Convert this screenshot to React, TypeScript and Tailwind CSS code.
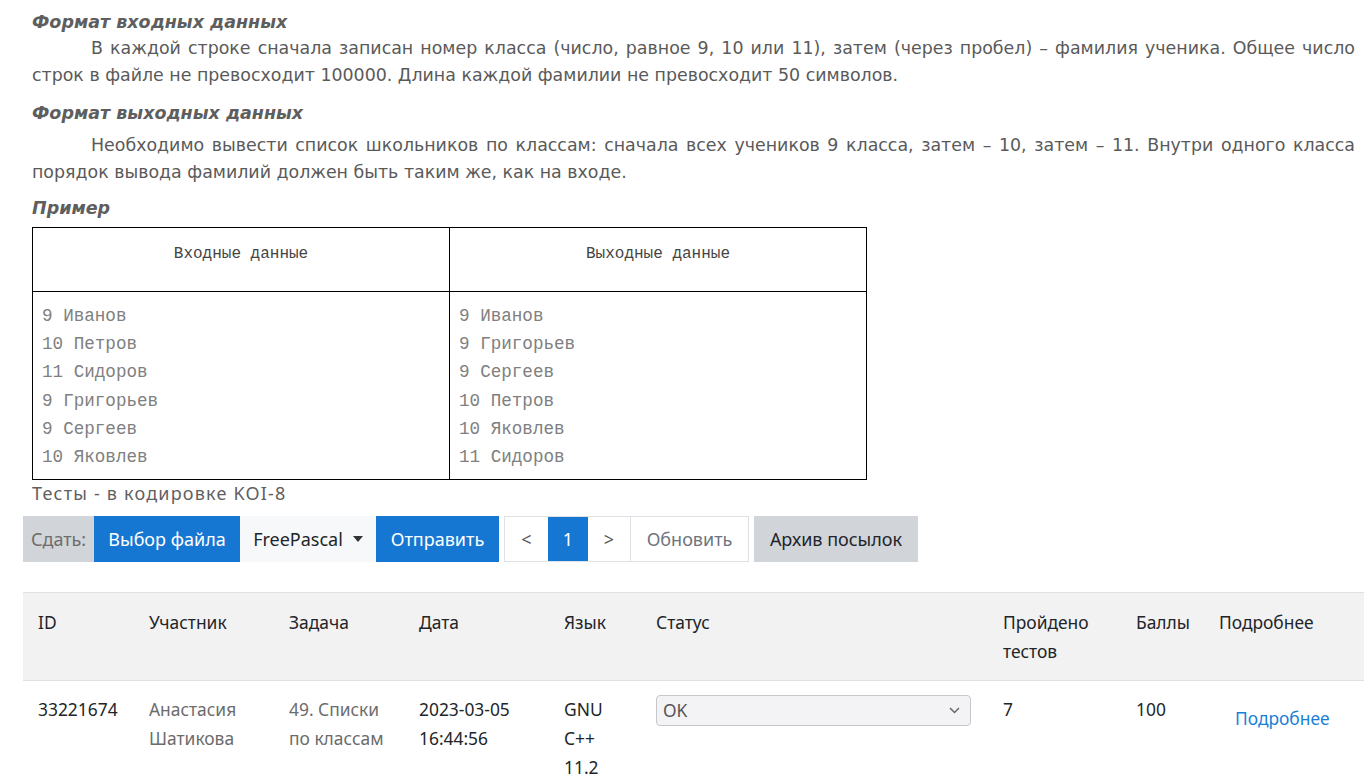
import React from "react";

const input = [
  ["9", "Иванов"],
  ["10", "Петров"],
  ["11", "Сидоров"],
  ["9", "Григорьев"],
  ["9", "Сергеев"],
  ["10", "Яковлев"],
];
const output = [
  ["9", "Иванов"],
  ["9", "Григорьев"],
  ["9", "Сергеев"],
  ["10", "Петров"],
  ["10", "Яковлев"],
  ["11", "Сидоров"],
];

const mono = { fontFamily: '"Liberation Mono", "Courier New", monospace' };
const statement = { fontFamily: '"DejaVu Sans", Verdana, sans-serif' };
const ui = { fontFamily: '"Noto Sans", "Open Sans", sans-serif' };

function Heading({ children }: { children: React.ReactNode }) {
  return <h3 className="text-[17.5px] font-bold italic text-[#5e5e5e] leading-[22px]">{children}</h3>;
}

function Lines({ rows }: { rows: string[][] }) {
  return (
    <div className="pt-[10px] pl-[9px] text-[17.6px] leading-[28.2px] text-[#808080]">
      {rows.map((r, i) => (
        <div key={i}>
          {r[0]} {r[1]}
        </div>
      ))}
    </div>
  );
}

export default function App() {
  return (
    <div className="bg-white min-h-screen w-[1371px] overflow-hidden">
      {/* statement */}
      <div className="pl-[32px] pr-[16px] pt-[11px] text-[#5a5a5a]" style={statement}>
        <Heading>Формат входных данных</Heading>
        <p className="text-[17.4px] leading-[27px] text-justify indent-[59px] mt-[2px]">
          В каждой строке сначала записан номер класса (число, равное 9, 10 или 11), затем (через пробел) – фамилия ученика. Общее число строк в файле не превосходит 100000. Длина каждой фамилии не превосходит 50 символов.
        </p>
        <div className="mt-[13px]">
          <Heading>Формат выходных данных</Heading>
        </div>
        <p className="text-[17.4px] leading-[27px] text-justify indent-[59px] mt-[8px]">
          Необходимо вывести список школьников по классам: сначала всех учеников 9 класса, затем – 10, затем – 11. Внутри одного класса порядок вывода фамилий должен быть таким же, как на входе.
        </p>
        <div className="mt-[11px]">
          <Heading>Пример</Heading>
        </div>

        {/* example table */}
        <div className="mt-[8px] w-[835px] border border-black grid grid-cols-[417px_416px]" style={mono}>
          <div className="h-[64px] border-b border-r border-black flex justify-center pt-[14px] text-[16px] text-[#444]">
            Входные данные
          </div>
          <div className="h-[64px] border-b border-black flex justify-center pt-[14px] text-[16px] text-[#444]">
            Выходные данные
          </div>
          <div className="border-r border-black h-[187px]">
            <Lines rows={input} />
          </div>
          <div className="h-[187px]">
            <Lines rows={output} />
          </div>
        </div>
      </div>

      <div className="px-[23px]" style={ui}>
        <div className="pl-[9px] mt-[1px] text-[18px] tracking-[1.2px] leading-[24px] text-[#5f5f5f]">Тесты - в кодировке KOI-8</div>

        {/* submit bar */}
        <div className="mt-[11px] flex items-stretch h-[46px] text-[18px]">
          <div className="w-[71px] bg-[#d1d4d9] text-[#6d6d6d] flex items-center justify-center">Сдать:</div>
          <div className="w-[146px] bg-[#1677d2] text-white flex items-center justify-center">Выбор файла</div>
          <div className="w-[136px] bg-[#f7f8f9] text-[#212529] flex items-center justify-center gap-[10px]">
            FreePascal
            <svg width="10" height="6" viewBox="0 0 10 6"><path d="M0 0h10L5 6z" fill="#333" /></svg>
          </div>
          <div className="w-[123px] bg-[#1677d2] text-white flex items-center justify-center">Отправить</div>

          <div className="ml-[5px] flex border border-[#dee2e6]">
            <div className="w-[43px] flex items-center justify-center text-[#555]">&lt;</div>
            <div className="w-[40px] bg-[#1677d2] text-white flex items-center justify-center">1</div>
            <div className="w-[43px] border-r border-[#dee2e6] flex items-center justify-center text-[#555]">&gt;</div>
            <div className="w-[117px] flex items-center justify-center text-[#6c757d]">Обновить</div>
          </div>
          <div className="ml-[5px] w-[164px] bg-[#d1d4d9] text-[#212529] flex items-center justify-center">Архив посылок</div>
        </div>

        {/* submissions table */}
        <div className="mt-[30px] w-[1341px] text-[17.4px] leading-[29px] text-[#212529]">
          <div className="grid grid-cols-[111px_140px_130px_145px_92px_347px_133px_83px_160px] bg-[#f2f2f2] border-t border-b border-[#dee2e6] h-[89px] pt-[15px]">
            <div className="pl-[15px]">ID</div>
            <div className="pl-[15px]">Участник</div>
            <div className="pl-[15px]">Задача</div>
            <div className="pl-[15px]">Дата</div>
            <div className="pl-[15px]">Язык</div>
            <div className="pl-[15px]">Статус</div>
            <div className="pl-[15px]">Пройдено<br />тестов</div>
            <div className="pl-[15px]">Баллы</div>
            <div className="pl-[15px]">Подробнее</div>
          </div>
          <div className="grid grid-cols-[111px_140px_130px_145px_92px_347px_133px_83px_160px] pt-[14px]">
            <div className="pl-[15px]">33221674</div>
            <div className="pl-[15px] text-[#6c6c6c]">Анастасия<br />Шатикова</div>
            <div className="pl-[15px] text-[#6c6c6c]">49. Списки<br />по классам</div>
            <div className="pl-[15px]">2023-03-05<br />16:44:56</div>
            <div className="pl-[15px]">GNU<br />C++<br />11.2</div>
            <div className="pl-[15px]">
              <div className="h-[31px] w-[315px] rounded-[4px] border border-[#c8c8cc] bg-[#f3f3f5] flex items-center justify-between pl-[6px] pr-[10px] text-[#555]">
                <span>OK</span>
                <svg width="11" height="7" viewBox="0 0 11 7" fill="none"><path d="M1 1l4.5 4.5L10 1" stroke="#666" strokeWidth="1.5" /></svg>
              </div>
            </div>
            <div className="pl-[15px]">7</div>
            <div className="pl-[15px]">100</div>
            <div className="pl-[31px] pt-[9px] text-[#1a7fd8]">Подробнее</div>
          </div>
        </div>
      </div>
    </div>
  );
}
